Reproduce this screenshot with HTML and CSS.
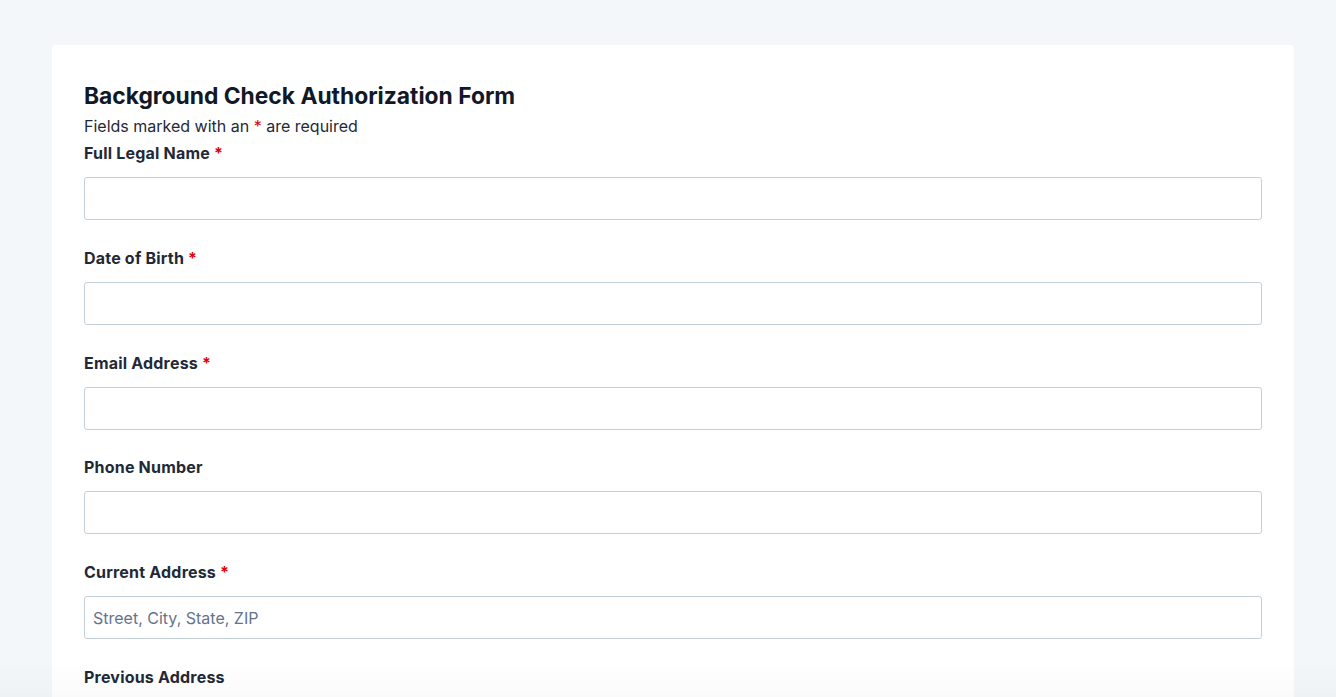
FILE: index.html
```html
<!DOCTYPE html>
<html lang="en">
<head>
  <meta charset="UTF-8" />
  <title>Background Check Authorization Form</title>
  <link rel="stylesheet" href="styles.css">
</head>
<body>
  <main class="card">
    <h1>Background Check Authorization Form</h1>
    <p class="note">Fields marked with an <span class="req">*</span> are required</p>

    <form>
      <div class="field">
        <label>Full Legal Name <span class="req">*</span></label>
        <input type="text">
      </div>
      <div class="field">
        <label>Date of Birth <span class="req">*</span></label>
        <input type="text">
      </div>
      <div class="field">
        <label>Email Address <span class="req">*</span></label>
        <input type="text">
      </div>
      <div class="field">
        <label>Phone Number</label>
        <input type="text">
      </div>
      <div class="field">
        <label>Current Address <span class="req">*</span></label>
        <input type="text" placeholder="Street, City, State, ZIP">
      </div>
      <div class="field">
        <label>Previous Address</label>
        <input type="text">
      </div>
    </form>
  </main>
  <div class="fade"></div>
</body>
</html>
```

FILE: styles.css
```css
body {
  margin: 0;
  padding: 45px 42px 40px 52px;
  background: #f4f7fa;
  font-family: Inter, "Noto Sans", Arial, sans-serif;
  color: #1f2937;
}

.card {
  background: #fff;
  border-radius: 4px;
  padding: 40px 32px 32px;
}

h1 {
  margin: 0;
  font-size: 22.8px;
  line-height: 22px;
  font-weight: 700;
  color: #111827;
}

.note {
  margin: 7px 0 0;
  font-size: 16px;
  line-height: 24px;
  color: #1f2937;
}

.req {
  color: #e00000;
}

.field {
  margin-bottom: 27.75px;
}

.field label {
  display: block;
  margin: 5px 0 13px;
  font-size: 16px;
  line-height: 21px;
  font-weight: 700;
  letter-spacing: 0.2px;
  color: #1f2937;
}

.field input {
  display: block;
  width: 100%;
  height: 43px;
  box-sizing: border-box;
  padding: 0 8px;
  border: 1px solid #c3cfd9;
  border-radius: 3px;
  font-family: inherit;
  font-size: 16px;
  color: #1f2937;
  background: #fff;
}

.field input::placeholder {
  color: #64748b;
}

.fade {
  position: fixed;
  left: 0;
  right: 0;
  bottom: 0;
  height: 34px;
  background: linear-gradient(rgba(0, 0, 0, 0), rgba(0, 0, 0, 0.02));
  pointer-events: none;
}
```
